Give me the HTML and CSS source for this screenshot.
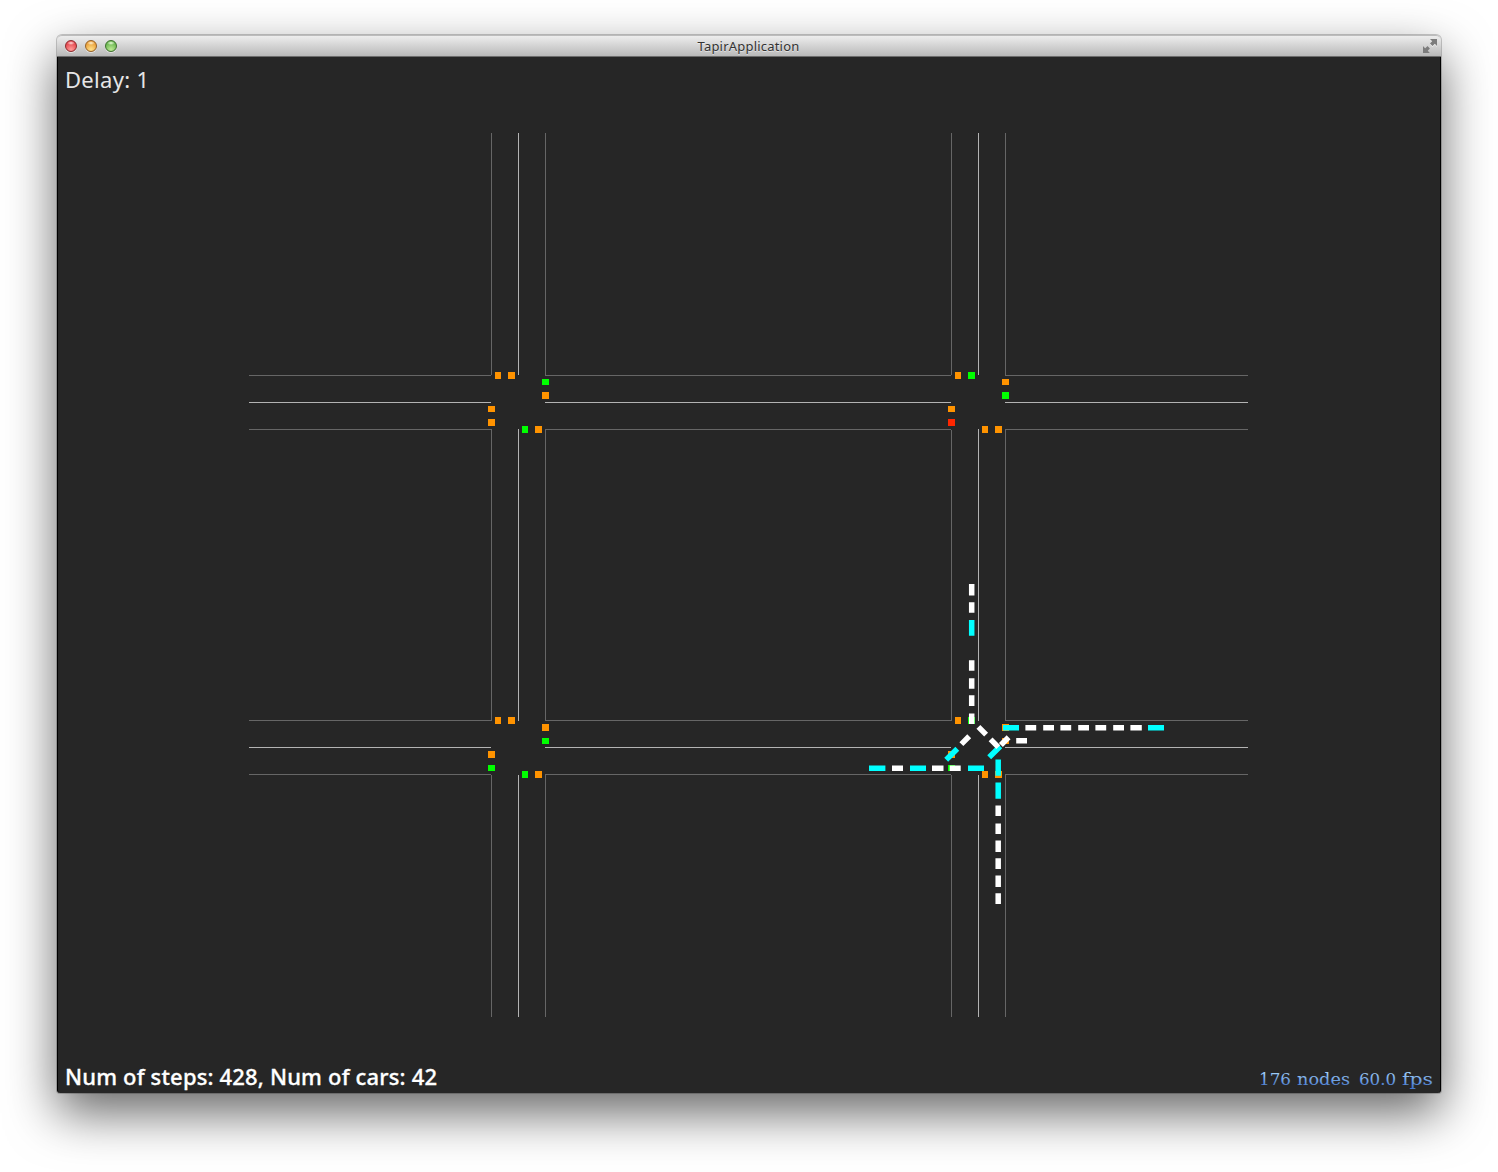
FILE: index.html
```
<!DOCTYPE html>
<html lang="en">
<head>
<meta charset="utf-8">
<title>TapirApplication</title>
<link rel="stylesheet" href="styles.css">
</head>
<body>
<main class="window">
  <header class="titlebar">
    <div class="controls"><span class="button close"></span><span class="button minimize"></span><span class="button maximize"></span></div>
    <h1 class="title">TapirApplication</h1>
    <svg class="fullscreen" width="14" height="14" viewBox="0 0 14 14"><path class="glint" d="M7 1H14V8L11.8 5.8L9.5 8L7 5.5L9.2 3.2ZM0 7L2.2 9.2L4.5 7L7 9.5L4.8 11.8L7 14H0Z"/><path class="arrow" d="M7 0H14V7L11.8 4.8L9.5 7L7 4.5L9.2 2.2ZM0 7L2.2 9.2L4.5 7L7 9.5L4.8 11.8L7 14H0Z"/></svg>
  </header>
  <svg class="scene" width="1382" height="1036" viewBox="58 57 1382 1036">
    <defs>
      <linearGradient id="stats-fill" x1="0" y1="1072" x2="0" y2="1087" gradientUnits="userSpaceOnUse"><stop offset="0" stop-color="#a4d3fa"/><stop offset="1" stop-color="#4577cc"/></linearGradient>
      <g id="verticals"><path class="edge" d="M491.5 133V375M545.5 133V375M491.5 430V721M545.5 429V720M491.5 775V1017M545.5 775V1017"/><path class="center" d="M518.5 133V375M518.5 429V721M518.5 775V1017"/></g>
    </defs>
    <g class="roads">
      <use href="#verticals"/><use href="#verticals" x="460"/>
      <path class="edge" d="M249 375.500H491M545 375.500H951M1005 375.500H1248M249 429.500H492M545 429.500H951M1005 429.500H1248M249 720.500H491M545 720.500H951M1005 720.500H1248M249 774.500H491M545 774.500H951M1005 774.500H1248"/>
      <path class="center" d="M249 402.500H491M545 402.500H951M1005 402.500H1248M249 747.500H491M545 747.500H951M1005 747.500H1248"/>
    </g>
    <g class="lights">
      <path class="orange" d="M495 372h6v7h-6zM508 372h7v7h-7zM542 392h7v7h-7zM488 406h7v6h-7zM488 419h7v7h-7zM535 426h7v7h-7z"/>
      <path class="green" d="M542 379h7v6h-7zM522 426h6v7h-6z"/>
      <path class="orange" d="M955 372h6v7h-6zM1002 379h7v6h-7zM948 406h7v6h-7zM982 426h6v7h-6zM995 426h7v7h-7z"/>
      <path class="green" d="M968 372h7v7h-7zM1002 392h7v7h-7z"/>
      <path class="red" d="M948 419h7v7h-7z"/>
      <path class="orange" d="M495 717h6v7h-6zM508 717h7v7h-7zM542 724h7v7h-7zM488 751h7v7h-7zM535 771h7v7h-7z"/>
      <path class="green" d="M542 738h7v6h-7zM488 765h7v6h-7zM522 771h6v7h-6z"/>
      <path class="orange" d="M955 717h6v7h-6zM1002 724h7v7h-7zM1002 738h7v6h-7zM948 751h7v7h-7zM982 771h6v7h-6zM995 771h7v7h-7z"/>
      <path class="green" d="M968 717h7v7h-7zM948 765h7v6h-7z"/>
    </g>
    <g class="cars">
      <path class="truck" d="M869 768.200h16.400M910 768.200h16M968 768.200h16M1003 727.700h16M1148 727.700h16M971.700 620v15.700M998.200 759.400v16.300M998.200 782.400v16.400M946.200 759.800L957.300 748.700M989.200 757.300L1000.300 746.200"/>
      <path class="car" d="M892 768.200h11M932 768.200h11.500M949.700 768.200h11M1025.400 727.700h10.800M1043.200 727.700h10.800M1060.400 727.700h10.800M1078.200 727.700h10.800M1095.400 727.700h10.800M1113.200 727.700h10.800M1130.400 727.700h11.400M1016.200 740.700h10.800"/>
      <path class="car" d="M971.700 584v11.400M971.700 602.200v10.600M971.700 660.200v10.600M971.700 678.200v10.600M971.700 695.200v10.800M971.700 713.400v10.600M998.200 805.400v10.600M998.200 823.400v10.600M998.200 840.400v11.600M998.200 858.200v10.800M998.200 875.400v11.500M998.200 893.300v10.700"/>
      <path class="car" d="M978.400 726.900L986.100 734.600M990.600 739.400L998.300 747.100M961.400 744.100L969.200 736.300M1000.900 745L1008.600 737.300"/>
    </g>
    <text class="label delay" x="65" y="88" textLength="84">Delay: 1</text>
    <text class="label summary" x="65" y="1085" textLength="372">Num of steps: 428, Num of cars: 42</text>
    <g class="stats"><text x="1259" y="1085" textLength="32" lengthAdjust="spacingAndGlyphs">176</text><text x="1297" y="1085" textLength="53" lengthAdjust="spacingAndGlyphs">nodes</text><text x="1359" y="1085" textLength="37" lengthAdjust="spacingAndGlyphs">60.0</text><text x="1402" y="1085" textLength="31" lengthAdjust="spacingAndGlyphs">fps</text></g>
  </svg>
</main>
</body>
</html>
```
FILE: styles.css
```
* { box-sizing: border-box; }
body {
  margin: 0;
  width: 1498px;
  height: 1172px;
  padding: 35px 57px 79px;
  overflow: hidden;
  background: #fff;
}
.window {
  width: 1384px;
  height: 1058px;
  display: flex;
  flex-direction: column;
  border-radius: 5px 5px 3px 3px;
  box-shadow: 0 20px 50px rgba(0, 0, 0, .6), 0 0 0 1px rgba(0, 0, 0, .2);
}
.titlebar {
  height: 22px;
  flex: none;
  display: grid;
  grid-template-columns: 100px 1fr 100px;
  align-items: center;
  border-radius: 5px 5px 0 0;
  border-top: 1px solid #bcbcbc;
  border-bottom: 1px solid #6c6c6c;
  background: linear-gradient(#ededed, #b9b9b9);
}
.controls { display: flex; gap: 8px; padding-left: 8px; }
.button {
  width: 12px;
  height: 12px;
  border-radius: 50%;
  border: 1px solid;
  box-shadow: 0 1px 0 rgba(255, 255, 255, .5);
}
.close { border-color: #8d2a2c; background: radial-gradient(ellipse 4px 2px at 50% 20%, #ffe0e0, transparent), radial-gradient(circle at 50% 85%, #ff9c98, #e4424a 75%); }
.minimize { border-color: #966126; background: radial-gradient(ellipse 4px 2px at 50% 20%, #fff4d8, transparent), radial-gradient(circle at 50% 85%, #ffe18a, #e99c35 75%); }
.maximize { border-color: #3d702c; background: radial-gradient(ellipse 4px 2px at 50% 20%, #edffdf, transparent), radial-gradient(circle at 50% 85%, #bdea94, #65b34c 75%); }
.title {
  margin: 0;
  text-align: center;
  font: 400 13px/20px "Noto Sans", sans-serif;
  letter-spacing: .2px;
  margin-left: -1px;
  color: #333;
  text-shadow: 0 1px 0 rgba(255, 255, 255, .5);
}
.fullscreen { justify-self: end; margin-right: 4px; }
.glint { fill: #eee; }
.arrow { fill: #7c7c7c; }
.scene {
  display: block;
  width: 1384px;
  height: 1036px;
  flex: none;
  background: #262626;
  border: solid #000;
  border-width: 0 1px;
  border-radius: 0 0 3px 3px;
}
.edge, .center { fill: none; stroke: #666; shape-rendering: crispEdges; }
.center { stroke: #b3b3b3; }
.orange { fill: #ff9300; }
.green { fill: #0f0; }
.red { fill: #ff2600; }
.car, .truck { fill: none; stroke: #fff; stroke-width: 5.5; }
.truck { stroke: #0ff; }
.label { font: 400 22px "Noto Sans", sans-serif; fill: #e6e6e6; }
.summary { font-weight: 500; fill: #fff; stroke: #fff; stroke-width: .3px; }
.stats { font: 16px "DejaVu Serif", serif; fill: url(#stats-fill); }
```
